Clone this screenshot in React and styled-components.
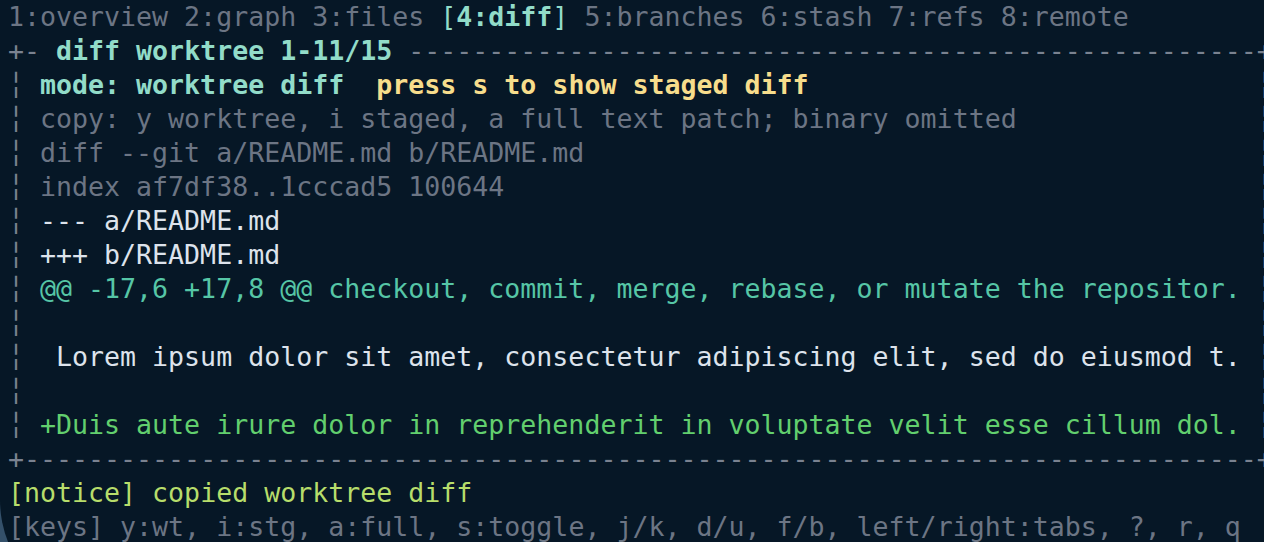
import React from 'react';
import styled, { createGlobalStyle } from 'styled-components';

const COLS = 79;

const GlobalStyle = createGlobalStyle`
  html, body {
    margin: 0;
    padding: 0;
    background: #34506a;
    overflow: hidden;
  }
`;

const Terminal = styled.main`
  box-sizing: border-box;
  height: 614px;
  padding: 0 8px;
  background: #061726;
  border-bottom-left-radius: 114px;
  overflow: hidden;
  font-family: "DejaVu Sans Mono", "Liberation Mono", monospace;
  font-size: 26.6px;
  line-height: 34px;
  color: #dde3ec;
`;

const Line = styled.div`
  display: flex;
  width: ${COLS}ch;
  height: 34px;
  white-space: pre;
`;

const Tab = styled.span`
  color: ${(p) => (p.$active ? '#92dcc9' : '#6c7584')};
  margin-right: 1ch;
  b {
    font-weight: 700;
  }
`;

const Edge = styled.span`
  color: #7a8290;
`;

const Title = styled.span`
  color: #92dcc9;
  font-weight: 700;
`;

const Content = styled.div`
  box-sizing: border-box;
  width: 77ch;
  padding-left: 1ch;
  overflow: hidden;
  color: ${(p) => p.$color || '#dde3ec'};
  font-weight: ${(p) => (p.$bold ? 700 : 400)};
`;

const Tone = styled.span`
  color: ${(p) => p.$color};
  font-weight: ${(p) => (p.$bold ? 700 : 400)};
`;

const Status = styled.div`
  height: 34px;
  white-space: pre;
  color: ${(p) => p.$color};
`;

const tabs = ['1:overview', '2:graph', '3:files', '4:diff', '5:branches', '6:stash', '7:refs', '8:remote'];

const Row = ({ color, bold, children }) => (
  <Line>
    <Edge>╎</Edge>
    <Content $color={color} $bold={bold}>{children}</Content>
    <Edge>╎</Edge>
  </Line>
);

const diffLines = [
  { text: 'copy: y worktree, i staged, a full text patch; binary omitted', color: '#6c7584' },
  { text: 'diff --git a/README.md b/README.md', color: '#6c7584' },
  { text: 'index af7df38..1cccad5 100644', color: '#6c7584' },
  { text: '--- a/README.md', color: '#dde3ec' },
  { text: '+++ b/README.md', color: '#dde3ec' },
  { text: '@@ -17,6 +17,8 @@ checkout, commit, merge, rebase, or mutate the repositor.', color: '#56c6a6' },
  { text: '', color: '#dde3ec' },
  { text: ' Lorem ipsum dolor sit amet, consectetur adipiscing elit, sed do eiusmod t.', color: '#dde3ec' },
  { text: '', color: '#dde3ec' },
  { text: '+Duis aute irure dolor in reprehenderit in voluptate velit esse cillum dol.', color: '#62cf6e' },
];

export default function App() {
  const title = 'diff worktree 1-11/15';
  return (
    <>
      <GlobalStyle />
      <Terminal>
        <Line>
          {tabs.map((t) =>
            t === '4:diff' ? (
              <Tab key={t} $active>
                [<b>{t}</b>]
              </Tab>
            ) : (
              <Tab key={t}>{t}</Tab>
            )
          )}
        </Line>
        <Line>
          <Edge>+- </Edge>
          <Title>{title}</Title>
          <Edge>{' ' + '-'.repeat(COLS - 5 - title.length) + '+'}</Edge>
        </Line>
        <Row bold color="#92dcc9">
          mode: worktree diff  <Tone $color="#f7dd8c" $bold>press s to show staged diff</Tone>
        </Row>
        {diffLines.map((l, i) => (
          <Row key={i} color={l.color}>{l.text}</Row>
        ))}
        <Line>
          <Edge>{'+' + '-'.repeat(COLS - 2) + '+'}</Edge>
        </Line>
        <Status $color="#b7dd6b">[notice] copied worktree diff</Status>
        <Status $color="#6c7584">[keys] y:wt, i:stg, a:full, s:toggle, j/k, d/u, f/b, left/right:tabs, ?, r, q</Status>
      </Terminal>
    </>
  );
}
